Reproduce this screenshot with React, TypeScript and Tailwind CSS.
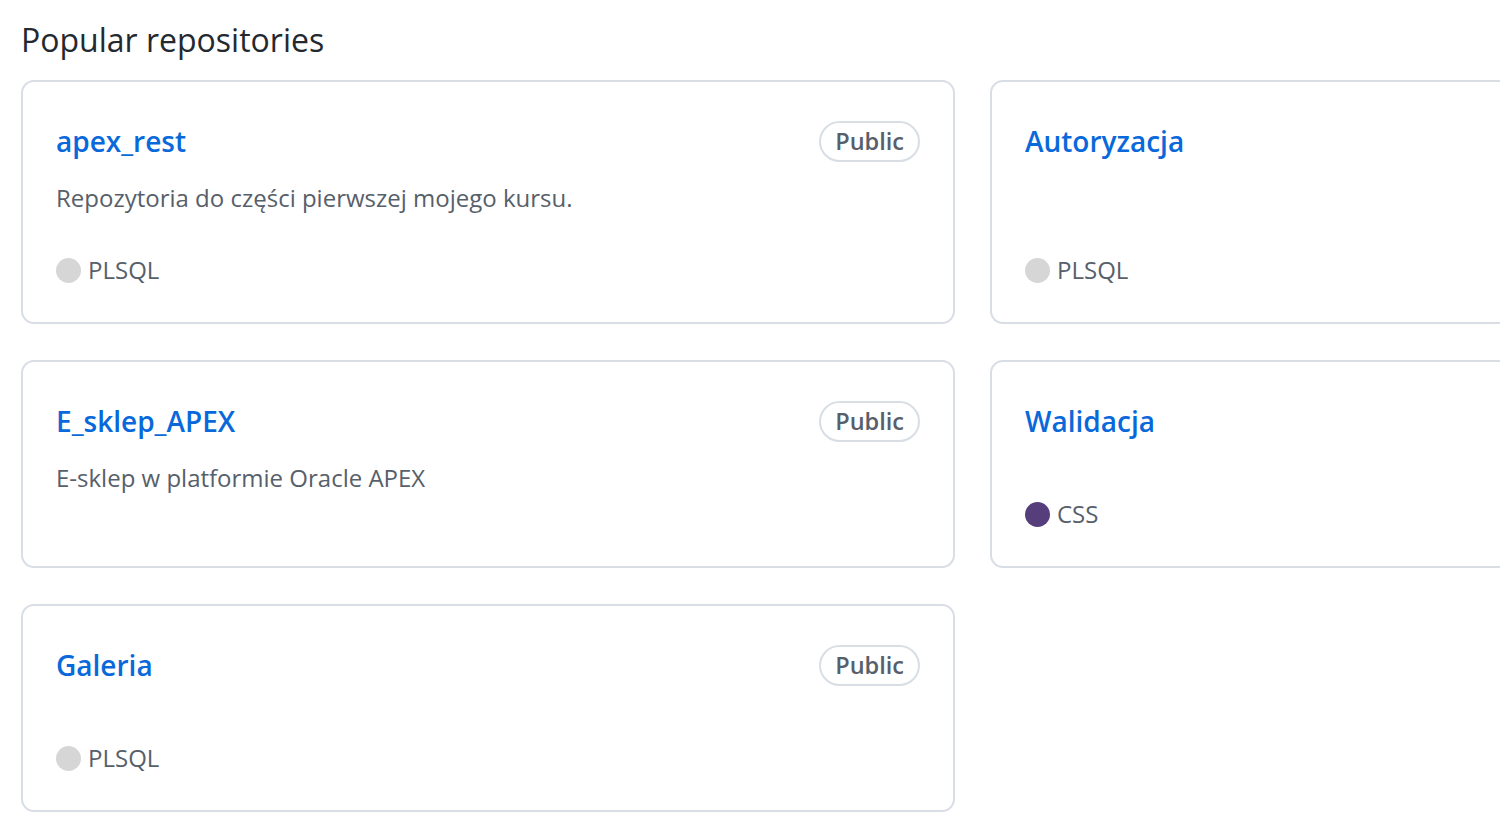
import React from 'react'

type Repo = {
  name: string
  desc?: string
  lang?: { name: string; color: string }
  badge?: boolean
}

const plsql = { name: 'PLSQL', color: '#d6d6d6' }
const css = { name: 'CSS', color: '#563d7c' }

// right column badges sit past the 1500px edge in the screenshot, so they are left out
const repos: Repo[] = [
  { name: 'apex_rest', desc: 'Repozytoria do części pierwszej mojego kursu.', lang: plsql, badge: true },
  { name: 'Autoryzacja', lang: plsql },
  { name: 'E_sklep_APEX', desc: 'E-sklep w platformie Oracle APEX', badge: true },
  { name: 'Walidacja', lang: css },
  { name: 'Galeria', lang: plsql, badge: true },
]

function RepoCard({ repo }: { repo: Repo }) {
  return (
    <div className="flex flex-col rounded-[13px] border-2 border-[#d8dee4] bg-white px-[33px] pt-[38px] pb-[34px]">
      <div className="flex h-[42px] items-center justify-between">
        <span className="text-[28px] font-semibold leading-[42px] text-[#0969da]">{repo.name}</span>
        {repo.badge && (
          <span className="rounded-full border-2 border-[#d8dee4] px-[14px] text-[23.5px] font-semibold leading-[37px] text-[#57606a]">
            Public
          </span>
        )}
      </div>
      <p className="mt-[18px] flex-1 text-[24px] leading-[36px] text-[#57606a]">{repo.desc}</p>
      {repo.lang && (
        <p className="mt-[36px] flex items-center gap-[7px] text-[24px] leading-[36px] text-[#57606a]">
          <span className="inline-block h-[25px] w-[25px] rounded-full" style={{ backgroundColor: repo.lang.color }} />
          {repo.lang.name}
        </p>
      )}
    </div>
  )
}

export default function App() {
  return (
    <div
      className="h-[840px] w-[1500px] overflow-hidden bg-white pl-[21px]"
      style={{ fontFamily: '"Open Sans", "Noto Sans", sans-serif' }}
    >
      <h2 className="pt-[16px] pb-[16px] text-[32px] font-normal leading-[48px] text-[#24292f]">Popular repositories</h2>
      <div className="grid w-[1903px] grid-cols-[934px_934px] gap-x-[35px] gap-y-[36px]">
        {repos.map((r) => (
          <RepoCard key={r.name} repo={r} />
        ))}
      </div>
    </div>
  )
}
